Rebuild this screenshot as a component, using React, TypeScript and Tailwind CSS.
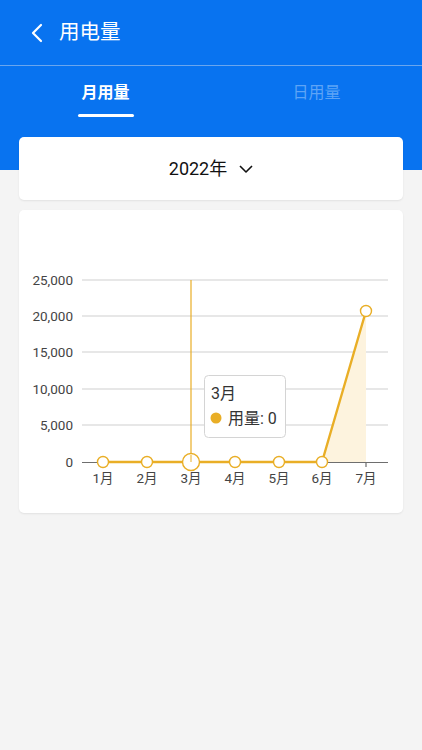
import React from "react";

const F = '"Roboto","Noto Sans CJK SC",sans-serif';

function Chart() {
  const xs = [103, 147, 191, 235, 279, 322, 366];
  const ys = [462, 462, 462, 462, 462, 462, 311];
  const grid = [
    { v: "25,000", y: 280 },
    { v: "20,000", y: 316 },
    { v: "15,000", y: 352 },
    { v: "10,000", y: 389 },
    { v: "5,000", y: 425 },
  ];
  const gold = "#E9AE26";
  return (
    <svg width="384" height="303" viewBox="19 210 384 303" className="block">
      {grid.map((g) => (
        <g key={g.v}>
          <line x1="82" x2="388" y1={g.y} y2={g.y} stroke="#cfcfcf" strokeWidth="1" />
          <text x="73" y={g.y + 4.5} textAnchor="end" fontSize="13.5" fill="#444" fontFamily={F}>
            {g.v}
          </text>
        </g>
      ))}
      <text x="73" y={467} textAnchor="end" fontSize="13.5" fill="#444" fontFamily={F}>
        0
      </text>
      <polygon points="322,462 366,311 366,462" fill="#FDF3DE" />
      <line x1="82" x2="388" y1="462.5" y2="462.5" stroke="#6e6e6e" strokeWidth="1.2" />
      <line x1="366" x2="366" y1="462" y2="467" stroke="#6e6e6e" strokeWidth="1.2" />
      <line x1="191" x2="191" y1="280" y2="462" stroke={gold} strokeWidth="1.2" />
      <polyline
        points={xs.map((x, i) => `${x},${ys[i]}`).join(" ")}
        fill="none"
        stroke={gold}
        strokeWidth="2.4"
        strokeLinejoin="round"
      />
      {xs.map((x, i) => (
        <circle key={i} cx={x} cy={ys[i]} r={i === 2 ? 8.5 : 5.5} fill="#fff" stroke={gold} strokeWidth="1.4" />
      ))}
      <line x1="191" x2="191" y1="455" y2="462" stroke={gold} strokeWidth="1" />
      {xs.map((x, i) => (
        <text key={i} x={x} y="483" textAnchor="middle" fontSize="13.5" fill="#444" fontFamily={F}>
          {i + 1}月
        </text>
      ))}
      <rect x="204.5" y="375.5" width="81" height="62" rx="4" fill="#fff" stroke="#d4d4d4" />
      <text x="211" y="399" fontSize="16" fill="#333" fontFamily={F}>
        3月
      </text>
      <circle cx="216" cy="418" r="5.5" fill={gold} />
      <text x="228" y="424" fontSize="16" fill="#333" fontFamily={F}>
        用量: 0
      </text>
    </svg>
  );
}

export default function App() {
  return (
    <div className="w-[422px] h-[750px] bg-[#f4f4f4] overflow-hidden" style={{ fontFamily: F }}>
      <div className="bg-[#0873F0] h-[170px] flex flex-col">
        <div className="h-[66px] flex items-center pl-[29px] border-b border-[#6aa6ee]">
          <svg width="16" height="20" viewBox="0 0 16 20" className="mr-[14px]">
            <path d="M12 2 L4 10 L12 18" fill="none" stroke="#fff" strokeWidth="2.2" strokeLinecap="round" strokeLinejoin="round" />
          </svg>
          <span className="text-white text-[20.5px] leading-none">用电量</span>
        </div>
        <div className="flex h-[53px]">
          <div className="flex-1 flex flex-col items-center justify-center relative">
            <span className="text-white text-[16px] font-bold leading-none mt-[1px]">月用量</span>
            <div className="absolute bottom-[2px] w-[56px] h-[3px] bg-white rounded-full" />
          </div>
          <div className="flex-1 flex items-center justify-center">
            <span className="text-[#5ea4f6] text-[16px] leading-none mt-[1px]">日用量</span>
          </div>
        </div>
      </div>
      <div className="mx-[19px] -mt-[33px] flex flex-col gap-[10px]">
        <div className="h-[63px] bg-white rounded-[5px] shadow-[0_1px_2px_rgba(0,0,0,0.08)] flex items-center justify-center">
          <span className="text-[18px] text-[#111] leading-none">2022年</span>
          <svg width="14" height="10" viewBox="0 0 14 10" className="ml-[12px] mt-[1px]">
            <path d="M1 2 L7 8 L13 2" fill="none" stroke="#111" strokeWidth="1.6" strokeLinejoin="round" />
          </svg>
        </div>
        <div className="h-[303px] bg-white rounded-[5px] shadow-[0_1px_2px_rgba(0,0,0,0.08)]">
          <Chart />
        </div>
      </div>
    </div>
  );
}
